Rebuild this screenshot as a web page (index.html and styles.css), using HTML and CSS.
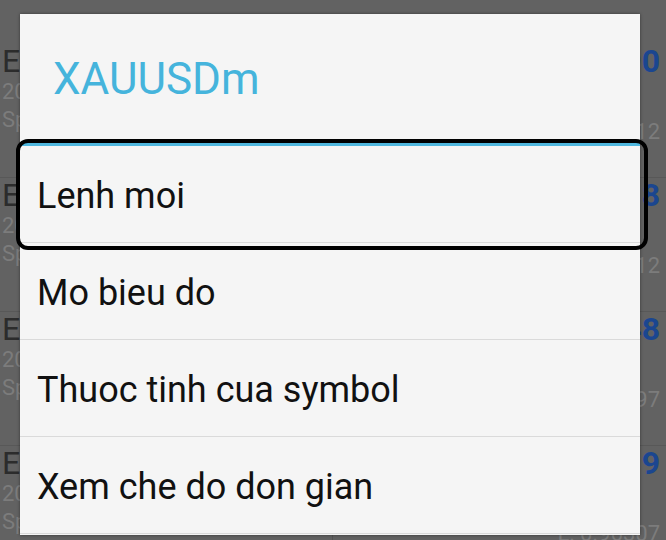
FILE: index.html
```html
<!DOCTYPE html>
<html lang="en">
<head>
    <meta charset="UTF-8">
    <meta name="viewport" content="width=device-width, initial-scale=1.0">
    <title>XAUUSDm</title>
    <link rel="stylesheet" href="styles.css">
</head>
<body>

    <div class="quotes">
        <div class="quote">
            <div class="cell left">
                <div class="sym">EURUSDm</div>
                <div class="sub">20:14:32</div>
                <div class="sub">Spread: 12</div>
            </div>
            <div class="cell right">
                <div class="price">1.08790</div>
                <div class="sub">L: 1.08712</div>
            </div>
        </div>
        <div class="quote">
            <div class="cell left">
                <div class="sym">EURJPYm</div>
                <div class="sub">20:14:31</div>
                <div class="sub">Spread: 22</div>
            </div>
            <div class="cell right">
                <div class="price">161.318</div>
                <div class="sub">L: 160.912</div>
            </div>
        </div>
        <div class="quote">
            <div class="cell left">
                <div class="sym">EURGBPm</div>
                <div class="sub">20:14:30</div>
                <div class="sub">Spread: 17</div>
            </div>
            <div class="cell right">
                <div class="price">0.85448</div>
                <div class="sub">L: 0.85397</div>
            </div>
        </div>
        <div class="quote">
            <div class="cell left">
                <div class="sym">EURCHFm</div>
                <div class="sub">20:14:30</div>
                <div class="sub">Spread: 27</div>
            </div>
            <div class="cell right">
                <div class="price">0.96419</div>
                <div class="sub">L: 0.96307</div>
            </div>
        </div>
    </div>

    <div class="dialog">
        <div class="dialog-title">XAUUSDm</div>
        <ul class="menu">
            <li class="menu-item selected">Lenh moi</li>
            <li class="menu-item">Mo bieu do</li>
            <li class="menu-item">Thuoc tinh cua symbol</li>
            <li class="menu-item">Xem che do don gian</li>
        </ul>
    </div>

</body>
</html>
```

FILE: styles.css
```css
* {
    margin: 0;
    padding: 0;
    box-sizing: border-box;
}

html, body {
    width: 666px;
    height: 540px;
    overflow: hidden;
}

body {
    font-family: Roboto, "Noto Sans", sans-serif;
    background-color: #626262;
    position: relative;
}

/* dimmed quote list behind the dialog */
.quotes {
    height: 540px;
    overflow: hidden;
    padding-top: 44px;
}

.quote {
    display: grid;
    grid-template-columns: 333px 333px;
    height: 134px;
    border-bottom: 1px solid #585858;
}

.cell {
    padding: 0 6px 0 2px;
    white-space: nowrap;
    overflow: hidden;
}

.cell.left {
    border-right: 1px solid #555;
}

.cell.right {
    text-align: right;
}

.sym {
    font-size: 32px;
    line-height: 34px;
    color: #2c2c2c;
}

.sub {
    font-size: 22px;
    line-height: 28px;
    color: #7c7c7c;
}

.price {
    font-size: 32px;
    line-height: 34px;
    font-weight: bold;
    color: #1b4690;
    margin-bottom: 40px;
}

/* context dialog */
.dialog {
    position: absolute;
    left: 20px;
    top: 14px;
    width: 620px;
    height: 521px;
    background-color: #f5f5f5;
    box-shadow: 0 0 3px rgba(0, 0, 0, 0.45);
}

.dialog-title {
    height: 132px;
    padding-left: 33px;
    display: flex;
    align-items: center;
    font-size: 44px;
    color: #45b4dc;
    border-bottom: 3px solid #4fb7de;
}

.menu {
    list-style: none;
}

.menu-item {
    position: relative;
    height: 97px;
    padding: 4px 0 0 17px;
    display: flex;
    align-items: center;
    font-size: 36px;
    color: #111;
    border-bottom: 1px solid #dadada;
}

.menu-item.selected::after {
    content: "";
    position: absolute;
    left: -4px;
    right: -8px;
    top: -7px;
    bottom: -8px;
    border: 4px solid #000;
    border-radius: 12px;
}
```
